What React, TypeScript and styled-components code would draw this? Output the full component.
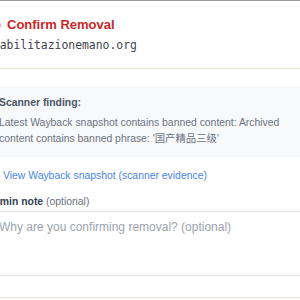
import { createGlobalStyle, styled } from "styled-components";

const GlobalStyle = createGlobalStyle`
  html, body {
    margin: 0;
    padding: 0;
    background: #ffffff;
  }
  body {
    font-family: "Liberation Sans", Arial, "Noto Sans CJK SC", sans-serif;
  }
`;

const Viewport = styled.div`
  width: 300px;
  height: 300px;
  overflow: hidden;
  background: #ffffff;
`;

const Modal = styled.div`
  width: 360px;
  margin-left: -30px;
  border-top: 1px solid #9b9b9b;
  background: #ffffff;
`;

const Header = styled.div`
  padding: 15px 16px 15px;
  border-bottom: 1px solid #f1e6da;
  display: flex;
  flex-direction: column;
  gap: 3px;
`;

const Title = styled.h2`
  margin: 0;
  display: flex;
  align-items: center;
  gap: 6px;
  font-size: 13px;
  line-height: 18px;
  font-weight: 700;
  color: #c62828;
`;

const Domain = styled.div`
  font-family: "DejaVu Sans Mono", "Liberation Mono", monospace;
  font-size: 11.4px;
  line-height: 16px;
  color: #3f4550;
`;

const Body = styled.div`
  padding: 17px 16px 0;
  display: flex;
  flex-direction: column;
`;

const FindingBox = styled.div`
  background: #f8f9fb;
  border-radius: 6px;
  padding: 10px 13px 10px;
  display: flex;
  flex-direction: column;
  gap: 5px;
`;

const FindingLabel = styled.div`
  font-size: 10.4px;
  line-height: 14px;
  font-weight: 700;
  color: #4b5563;
`;

const FindingText = styled.div`
  font-size: 10.4px;
  line-height: 16px;
  color: #6b7280;
`;

const EvidenceLink = styled.a`
  margin-top: 12px;
  display: flex;
  align-items: center;
  gap: 3px;
  font-size: 10.4px;
  line-height: 14px;
  color: #4a86e8;
  text-decoration: none;
`;

const NoteLabel = styled.label`
  margin-top: 12px;
  font-size: 10.4px;
  line-height: 14px;
  font-weight: 700;
  color: #374151;
`;

const Optional = styled.span`
  font-weight: 400;
  color: #6b7280;
`;

const NoteInput = styled.textarea`
  margin-top: 2px;
  height: 65px;
  box-sizing: border-box;
  border: 1px solid #e5e7eb;
  border-radius: 6px;
  padding: 7px 12px;
  resize: none;
  font-family: "Liberation Sans", Arial, sans-serif;
  font-size: 12px;
  line-height: 16px;
  color: #374151;
  &::placeholder {
    color: #9ca3af;
  }
`;

const Footer = styled.div`
  margin-top: 21px;
  border-top: 1px solid #f1e6da;
  height: 20px;
`;

function BlockIcon() {
  return (
    <svg width="15" height="15" viewBox="0 0 16 16" fill="none" stroke="currentColor" strokeWidth="1.8">
      <circle cx="8" cy="8" r="6.5" />
      <path d="M3.5 12.5l9-9" />
    </svg>
  );
}

function ArrowIcon() {
  return (
    <svg width="14" height="14" viewBox="0 0 14 14" fill="none" stroke="currentColor" strokeWidth="1.4" strokeLinecap="round" strokeLinejoin="round">
      <path d="M1 7h12M9 3l4 4-4 4" />
    </svg>
  );
}

export default function App() {
  return (
    <>
      <GlobalStyle />
      <Viewport>
        <Modal>
          <Header>
            <Title>
              <BlockIcon />
              Confirm Removal
            </Title>
            <Domain>riabilitazionemano.org</Domain>
          </Header>
          <Body>
            <FindingBox>
              <FindingLabel>Scanner finding:</FindingLabel>
              <FindingText>
                Latest Wayback snapshot contains banned content: Archived content contains banned
                phrase: '国产精品三级'
              </FindingText>
            </FindingBox>
            <EvidenceLink href="#">
              <ArrowIcon />
              View Wayback snapshot (scanner evidence)
            </EvidenceLink>
            <NoteLabel>
              Admin note <Optional>(optional)</Optional>
            </NoteLabel>
            <NoteInput placeholder="Why are you confirming removal? (optional)" />
          </Body>
          <Footer />
        </Modal>
      </Viewport>
    </>
  );
}
